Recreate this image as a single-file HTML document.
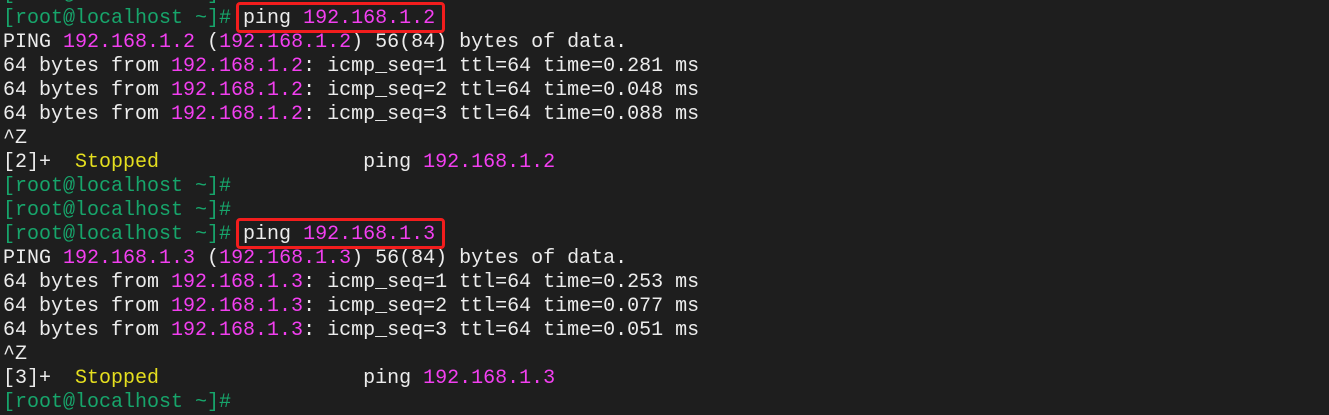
<!DOCTYPE html>
<html><head><meta charset="utf-8"><style>
html,body{margin:0;padding:0;background:#1e1e1e;width:1329px;height:410px;overflow:hidden}
pre{position:absolute;left:3px;top:-17px;margin:0;font-family:"Liberation Mono",monospace;font-size:20px;line-height:24px;color:#ececec;white-space:pre}
.g{color:#17a56b}.m{color:#f23ff0}.y{color:#e5df1f}
.box{position:absolute;border:3px solid #f21d1d;border-radius:4px;box-sizing:border-box}
</style></head><body>
<pre><span class="g">[root@localhost ~]#</span>
<span class="g">[root@localhost ~]#</span> ping <span class="m">192.168.1.2</span>
PING <span class="m">192.168.1.2</span> (<span class="m">192.168.1.2</span>) 56(84) bytes of data.
64 bytes from <span class="m">192.168.1.2</span>: icmp_seq=1 ttl=64 time=0.281 ms
64 bytes from <span class="m">192.168.1.2</span>: icmp_seq=2 ttl=64 time=0.048 ms
64 bytes from <span class="m">192.168.1.2</span>: icmp_seq=3 ttl=64 time=0.088 ms
^Z
[2]+  <span class="y">Stopped</span>                 ping <span class="m">192.168.1.2</span>
<span class="g">[root@localhost ~]#</span>
<span class="g">[root@localhost ~]#</span>
<span class="g">[root@localhost ~]#</span> ping <span class="m">192.168.1.3</span>
PING <span class="m">192.168.1.3</span> (<span class="m">192.168.1.3</span>) 56(84) bytes of data.
64 bytes from <span class="m">192.168.1.3</span>: icmp_seq=1 ttl=64 time=0.253 ms
64 bytes from <span class="m">192.168.1.3</span>: icmp_seq=2 ttl=64 time=0.077 ms
64 bytes from <span class="m">192.168.1.3</span>: icmp_seq=3 ttl=64 time=0.051 ms
^Z
[3]+  <span class="y">Stopped</span>                 ping <span class="m">192.168.1.3</span>
<span class="g">[root@localhost ~]#</span></pre>
<div class="box" style="left:236px;top:2px;width:209px;height:31px"></div>
<div class="box" style="left:236px;top:218px;width:209px;height:31px"></div>
</body></html>
